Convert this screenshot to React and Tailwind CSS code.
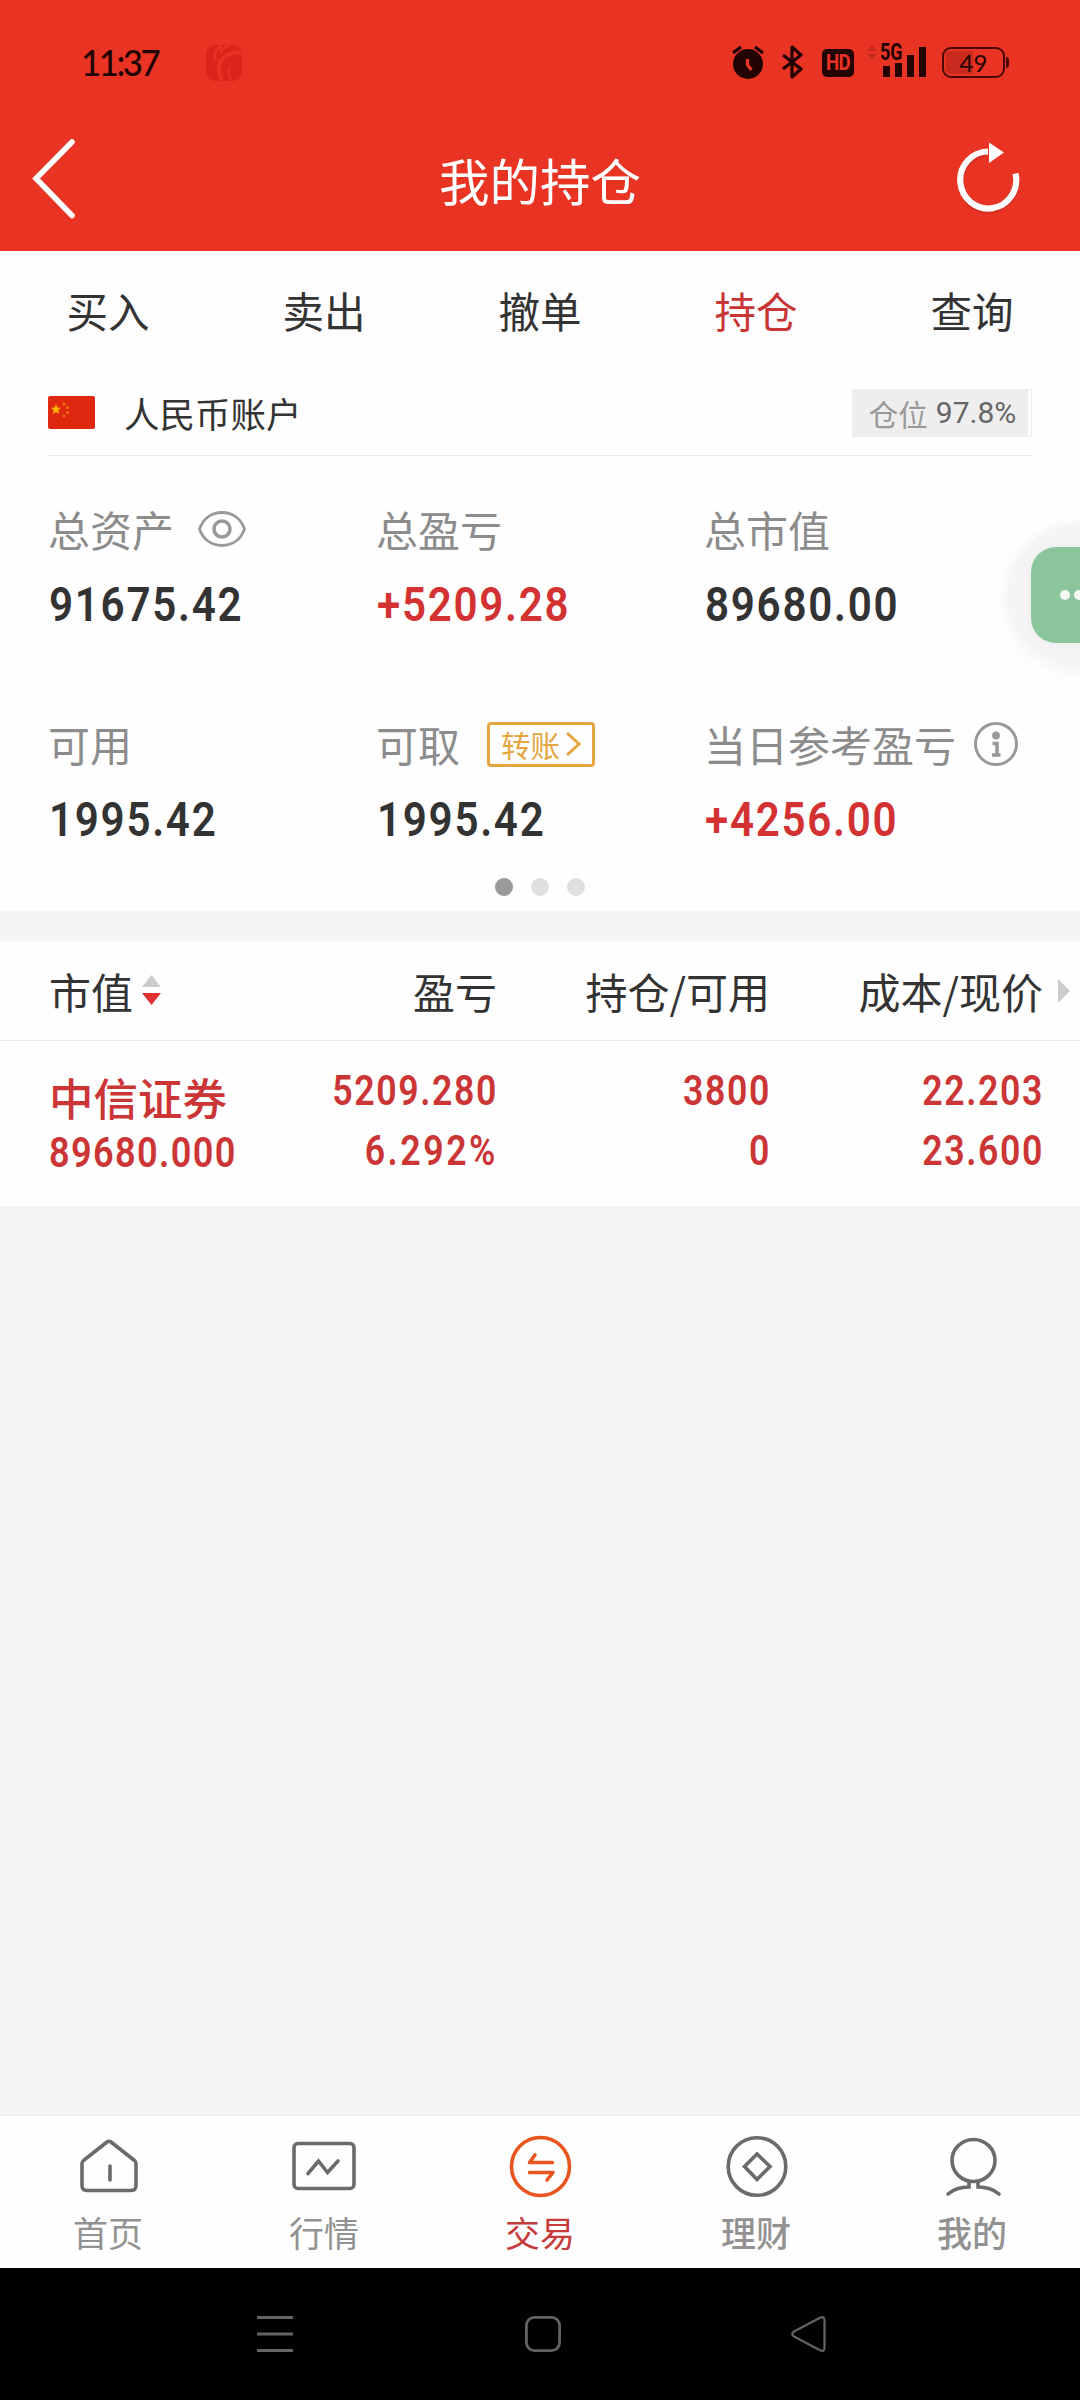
const tabs = ["买入", "卖出", "撤单", "持仓", "查询"];

function StatusBar() {
  return (
    <div className="flex h-[124px] items-start pt-[40px] text-[#220302]">
      <div className="ml-[81px] h-[44px] w-[82px] origin-left scale-x-[0.94] font-['Lato'] text-[37px] leading-[44px] font-medium tracking-[-2.6px]">
        11:37
      </div>
      <svg className="mt-[5px] ml-[43px]" width="36" height="36" viewBox="0 0 36 36">
        <rect width="36" height="36" rx="9" fill="#dc241d" />
        <g fill="none" stroke="#e93424">
          <path d="M36 8C24 6 12 13 13 24c0 5 2 9 3 12" strokeWidth="4" />
          <path d="M16 1C9 4 7 9 10 16M23 1c-4 1-7 3-9 6" strokeWidth="2.5" />
          <path d="M23 22c-1 5 0 9 2 13" strokeWidth="2" />
        </g>
      </svg>

      <svg className="mt-[5px] ml-[490px]" width="32" height="35" viewBox="0 0 32 35">
        <circle cx="16" cy="19" r="15" fill="#220302" />
        <path d="M1 8 9 2M31 8l-8-6" stroke="#220302" strokeWidth="3.4" />
        <path d="M15.5 14v6l4 5" fill="none" stroke="#e93424" strokeWidth="3.2" />
      </svg>
      <svg className="mt-[5px] ml-[18px]" width="21" height="34" viewBox="0 0 21 34">
        <path
          d="M1 10l18 14-9 8V2l9 8L1 24"
          fill="none"
          stroke="#220302"
          strokeWidth="3.2"
          strokeLinejoin="round"
        />
      </svg>
      <div className="mt-[9px] ml-[19px] h-[28px] w-[32px] rounded-[5px] bg-[#220302] text-center font-['Roboto'] text-[22px] leading-[28px] font-bold tracking-[-1px] text-[#e93424]">
        <span className="inline-block scale-x-[0.85]">HD</span>
      </div>
      <svg className="mt-[5px] ml-[13px]" width="10" height="16" viewBox="0 0 10 16">
        <path d="M0 6l5-6 5 6zM0 9h10l-5 6z" fill="#c62a1d" />
      </svg>
      <div className="relative ml-[3px] h-[38px] w-[47px]">
        <span className="absolute top-px left-0 origin-left scale-x-[0.78] font-['Roboto'] text-[23px] leading-[24px] font-bold">
          5G
        </span>
        <svg className="absolute top-[7px] left-[3px]" width="44" height="30" viewBox="0 0 44 30">
          <path d="M0 19h7v11H0zM12 16h7v14h-7zM24 8h7v22h-7zM36 0h7v30h-7z" fill="#220302" />
        </svg>
      </div>
      <div className="mt-[7px] ml-[15px] flex items-center gap-px">
        <div className="relative h-[31px] w-[63px] rounded-[9px] border-[2.5px] border-[#4a0905] p-[2px]">
          <div className="h-full w-[27px] rounded-l-[4px] bg-[#c92a1d]" />
          <span className="absolute inset-0 text-center font-['Lato'] text-[24px] leading-[27px]">49</span>
        </div>
        <div className="h-[11px] w-[3px] rounded-r bg-[#4a0905]" />
      </div>
    </div>
  );
}

function TitleBar() {
  return (
    <div className="flex h-[127px] items-start justify-between pr-[60px] pl-[32px]">
      <svg className="mt-[14px]" width="44" height="82" viewBox="0 0 44 82">
        <path d="M40 4 4 40.500l36 37" fill="none" stroke="#fff" strokeWidth="5.5" strokeLinecap="round" />
      </svg>
      <h1 className="ml-[48px] text-[50.5px] leading-[110px] font-normal text-white">我的持仓</h1>
      <svg className="mt-[16px]" width="64" height="74" viewBox="0 0 64 74">
        <path d="M32 12.500a28 28.500 0 1 0 27.500 20.500" fill="none" stroke="#b8281c" strokeWidth="6" opacity=".35" transform="translate(0 1.500)" />
        <path d="M32 11.500a28 28.500 0 1 0 27.500 22" fill="none" stroke="#fff" strokeWidth="6.2" />
        <path d="M33 2.500 48 12.500 33 23z" fill="#fff" />
      </svg>
    </div>
  );
}

function Figure({ label, value, red, children }) {
  return (
    <div>
      <div className="flex h-[48px] items-center text-[42px] leading-[48px] whitespace-nowrap text-[#8c8c8c]">
        {label}
        {children}
      </div>
      <div
        className={
          "mt-[24px] ml-px h-[54px] origin-left scale-x-[0.86] font-['Roboto'] text-[49px] leading-[56px] font-semibold tracking-[2px] " +
          (red ? "text-[#d33232]" : "text-[#333]")
        }
      >
        {value}
      </div>
    </div>
  );
}

function Account() {
  return (
    <section className="h-[536px] bg-[#fefefe] px-[48px]">
      <div className="flex h-[81px] items-center border-b border-[#e9e9e9] pb-[5px]">
        <svg width="47" height="33" viewBox="0 0 47 33">
          <rect width="47" height="33" rx="2" fill="#de2910" />
          <path d="M8 8l1.400 3.600 3.800.2-3 2.400 1 3.800L8 16l-3.200 2 1-3.800-3-2.400 3.800-.2z" fill="#ffb400" />
          <g fill="#f0700c">
            <circle cx="16" cy="8" r="1.500" />
            <circle cx="19.500" cy="11.500" r="1.500" />
            <circle cx="19.500" cy="16.500" r="1.500" />
            <circle cx="16" cy="20" r="1.500" />
          </g>
        </svg>
        <span className="ml-[29px] text-[35.500px] leading-[48px] text-[#333]">人民币账户</span>
        <div className="ml-auto h-[48px] border border-[#eee] pr-[3px]">
          <div className="flex h-[46px] w-[175px] items-center justify-center bg-[#eee] pl-1 text-[29.5px] leading-[42px] text-[#999]">
            仓位
            <span className="ml-[8px] font-['Roboto'] text-[30px] text-[#666]">97.8%</span>
          </div>
        </div>
      </div>

      <div className="grid grid-cols-3 gap-y-[89px] pt-[49px]">
        <Figure label="总资产" value="91675.42">
          <svg className="ml-[24px]" width="48" height="36" viewBox="0 0 48 36">
            <g fill="none" stroke="#999">
              <path
                d="M1.500 18C5 8 13 1.500 24 1.500S43 8 46.500 18C43 28 35 34.500 24 34.500S5 28 1.500 18z"
                strokeWidth="2.800"
              />
              <circle cx="24" cy="18" r="8" strokeWidth="3.600" />
            </g>
          </svg>
        </Figure>
        <Figure label="总盈亏" value="+5209.28" red />
        <Figure label="总市值" value="89680.00" />
        <Figure label="可用" value="1995.42" />
        <Figure label="可取" value="1995.42">
          <span className="ml-[27px] flex h-[45px] w-[108px] items-center justify-center gap-[5px] rounded-[4px] border-3 border-[#e5a641] text-[29.5px] text-[#e5a641]">
            转账
            <svg width="16" height="26" viewBox="0 0 16 26">
              <path d="M2 2l12 11L2 24" fill="none" stroke="#e5a641" strokeWidth="3" />
            </svg>
          </span>
        </Figure>
        <Figure label="当日参考盈亏" value="+4256.00" red>
          <svg className="ml-[18px] shrink-0" width="44" height="44" viewBox="0 0 44 44">
            <circle cx="22" cy="22" r="20.500" fill="none" stroke="#999" strokeWidth="3" />
            <circle cx="22" cy="13.500" r="3.900" fill="#999" />
            <path d="M18.500 21.500H23v11M18 33h8.500" fill="none" stroke="#999" strokeWidth="3.600" />
          </svg>
        </Figure>
      </div>

      <div className="mt-[32px] flex justify-center gap-[18px]">
        <i className="size-[18px] rounded-full bg-[#999]" />
        <i className="size-[18px] rounded-full bg-[#dfdfdf]" />
        <i className="size-[18px] rounded-full bg-[#dfdfdf]" />
      </div>
    </section>
  );
}

const columns = [
  { first: "5209.280", second: "6.292%" },
  { first: "3800", second: "0" },
  { first: "22.203", second: "23.600" },
];

function Positions() {
  return (
    <section className="mt-[30px] bg-[#fefefe]">
      <div className="grid h-[100px] grid-cols-[225px_223px_273px_273px_1fr] items-center border-b border-[#e9e9e9] pr-[10px] pl-[49px] text-right text-[42px] text-[#333]">
        <div className="flex items-center gap-[9px]">
          市值
          <svg width="20" height="31" viewBox="0 0 20 31">
            <path d="M0 12 9.500 0 19 12z" fill="#ccc" />
            <path d="M0 18h19L9.500 30z" fill="#e03030" />
          </svg>
        </div>
        <div>盈亏</div>
        <div>持仓/可用</div>
        <div>成本/现价</div>
        <svg className="justify-self-end" width="12" height="24" viewBox="0 0 12 24">
          <path d="M0 0l12 12L0 24z" fill="#ccc" />
        </svg>
      </div>

      <div className="grid h-[165px] grid-cols-[225px_224px_273px_273px] pl-[49px] text-[#cb3535]">
        <div className="pt-[26px]">
          <div className="text-[44.5px] leading-[60px] font-medium whitespace-nowrap">中信证券</div>
          <div className="mt-[3px] origin-left scale-x-[0.86] font-['Roboto'] text-[42px] leading-[46px] font-semibold tracking-[1.6px]">
            89680.000
          </div>
        </div>
        {columns.map((c) => (
          <div
            key={c.first}
            className="origin-right scale-x-[0.85] pt-[20px] text-right font-['Roboto'] text-[42px] leading-[60px] font-semibold tracking-[1.9px]"
          >
            <div>{c.first}</div>
            <div className={c.second.endsWith("%") ? "tracking-[3px]" : ""}>{c.second}</div>
          </div>
        ))}
      </div>
    </section>
  );
}

function HomeIcon() {
  return (
    <svg width="64" height="64" viewBox="0 0 64 64" fill="none" stroke="#6b6b6b" strokeWidth="3.600" strokeLinecap="round" strokeLinejoin="round">
      <path d="M31 8q2-1.500 4 0l23.500 18.500q1.500 1.300 1.500 3V51.500q0 5-5 5H11q-5 0-5-5v-22q0-1.700 1.500-3z" />
      <path d="M34 32v14" />
    </svg>
  );
}

function ChartIcon() {
  return (
    <svg width="64" height="64" viewBox="0 0 64 64" fill="none" stroke="#6b6b6b" strokeWidth="3.600" strokeLinecap="round">
      <rect x="2" y="9.500" width="60" height="45" rx="4" />
      <path d="M16 39.500l10.500-12.500 9 11.500L46 27" />
    </svg>
  );
}

function TradeIcon() {
  return (
    <svg width="64" height="64" viewBox="0 0 64 64" fill="none" stroke="#e9551f" strokeWidth="3.600" strokeLinecap="round" strokeLinejoin="round">
      <circle cx="32.500" cy="32.500" r="29" />
      <path d="M27 21l-5.500 7.500H44.500M21.500 38.500h23.500L39 46" />
    </svg>
  );
}

function WealthIcon() {
  return (
    <svg width="64" height="64" viewBox="0 0 64 64" fill="none" stroke="#6b6b6b" strokeWidth="3.600">
      <circle cx="33" cy="32.500" r="28.800" />
      <path d="M33 20 46 32.500 33 45.500 20.500 32.500z" />
    </svg>
  );
}

function MineIcon() {
  return (
    <svg width="64" height="64" viewBox="0 0 64 64" fill="none" stroke="#6b6b6b" strokeWidth="3.600">
      <ellipse cx="33.500" cy="26.500" rx="21.500" ry="21" />
      <path d="M29 48v5q-13 0-21 7M38 48v5q13 0 21 7" strokeLinecap="round" />
    </svg>
  );
}

const navItems = [
  { name: "首页", icon: HomeIcon },
  { name: "行情", icon: ChartIcon },
  { name: "交易", icon: TradeIcon, active: true },
  { name: "理财", icon: WealthIcon, medium: true },
  { name: "我的", icon: MineIcon, medium: true },
];

function BottomNav() {
  return (
    <nav className="mt-auto grid h-[153px] grid-cols-5 border-t border-[#ebebeb] bg-[#fefefe]">
      {navItems.map(({ name, icon: Icon, active, medium }) => (
        <div key={name} className="flex flex-col items-center pt-[18px]">
          <Icon />
          <span
            className={
              "mt-[9px] text-[35px] leading-[50px] " +
              (active ? "text-[#c53b3b] " : "text-[#929292] ") +
              (medium ? "font-medium" : "font-normal")
            }
          >
            {name}
          </span>
        </div>
      ))}
    </nav>
  );
}

function SystemNav() {
  return (
    <div className="flex h-[132px] items-center gap-[231px] bg-black pl-[257px]">
      <svg width="36" height="36" viewBox="0 0 36 36" stroke="#636363" strokeWidth="3">
        <path d="M0 1.500h36M0 18h36M0 34.500h36" />
      </svg>
      <svg className="ml-px" width="36" height="36" viewBox="0 0 36 36" fill="none" stroke="#636363" strokeWidth="2.800">
        <rect x="1.400" y="1.400" width="33.200" height="33.200" rx="8" />
      </svg>
      <svg className="-ml-px" width="35" height="36" viewBox="0 0 35 36" fill="none" stroke="#636363" strokeWidth="2.300">
        <path d="M29 1.800q4.500-2 4.500 3v26.400q0 5-4.500 3L3 20.500q-3.500-2.500 0-5z" strokeLinejoin="round" />
      </svg>
    </div>
  );
}

export default function App() {
  return (
    <div className="relative flex h-[2400px] w-[1080px] flex-col overflow-hidden bg-[#f4f4f4] font-['Noto_Sans_CJK_SC',sans-serif]">
      <header className="bg-[#e93424]">
        <StatusBar />
        <TitleBar />
      </header>

      <div className="grid h-[124px] grid-cols-5 bg-[#fdfdfd] text-center text-[41.5px] leading-[119px] text-[#333]">
        {tabs.map((t) => (
          <div key={t} className={t === "持仓" ? "text-[#c93434]" : ""}>
            {t}
          </div>
        ))}
      </div>

      <Account />
      <Positions />
      <BottomNav />
      <SystemNav />

      {/* floating chat bubble, half off screen */}
      <div className="absolute top-[523px] left-[1007px] size-[144px] rounded-full bg-black/[0.035] shadow-[0_3px_18px_rgba(0,0,0,0.05)]">
        <div className="mt-[24px] ml-[24px] flex size-[96px] items-center gap-[4px] rounded-[25px] bg-[#8bc59c] pl-[29px] shadow-[0_0_16px_rgba(0,0,0,0.04)]">
          <i className="size-[10px] rounded-full bg-[#f3f8f4]" />
          <i className="size-[10px] rounded-full bg-[#f3f8f4]" />
          <i className="size-[10px] rounded-full bg-[#f3f8f4]" />
        </div>
      </div>
    </div>
  );
}
